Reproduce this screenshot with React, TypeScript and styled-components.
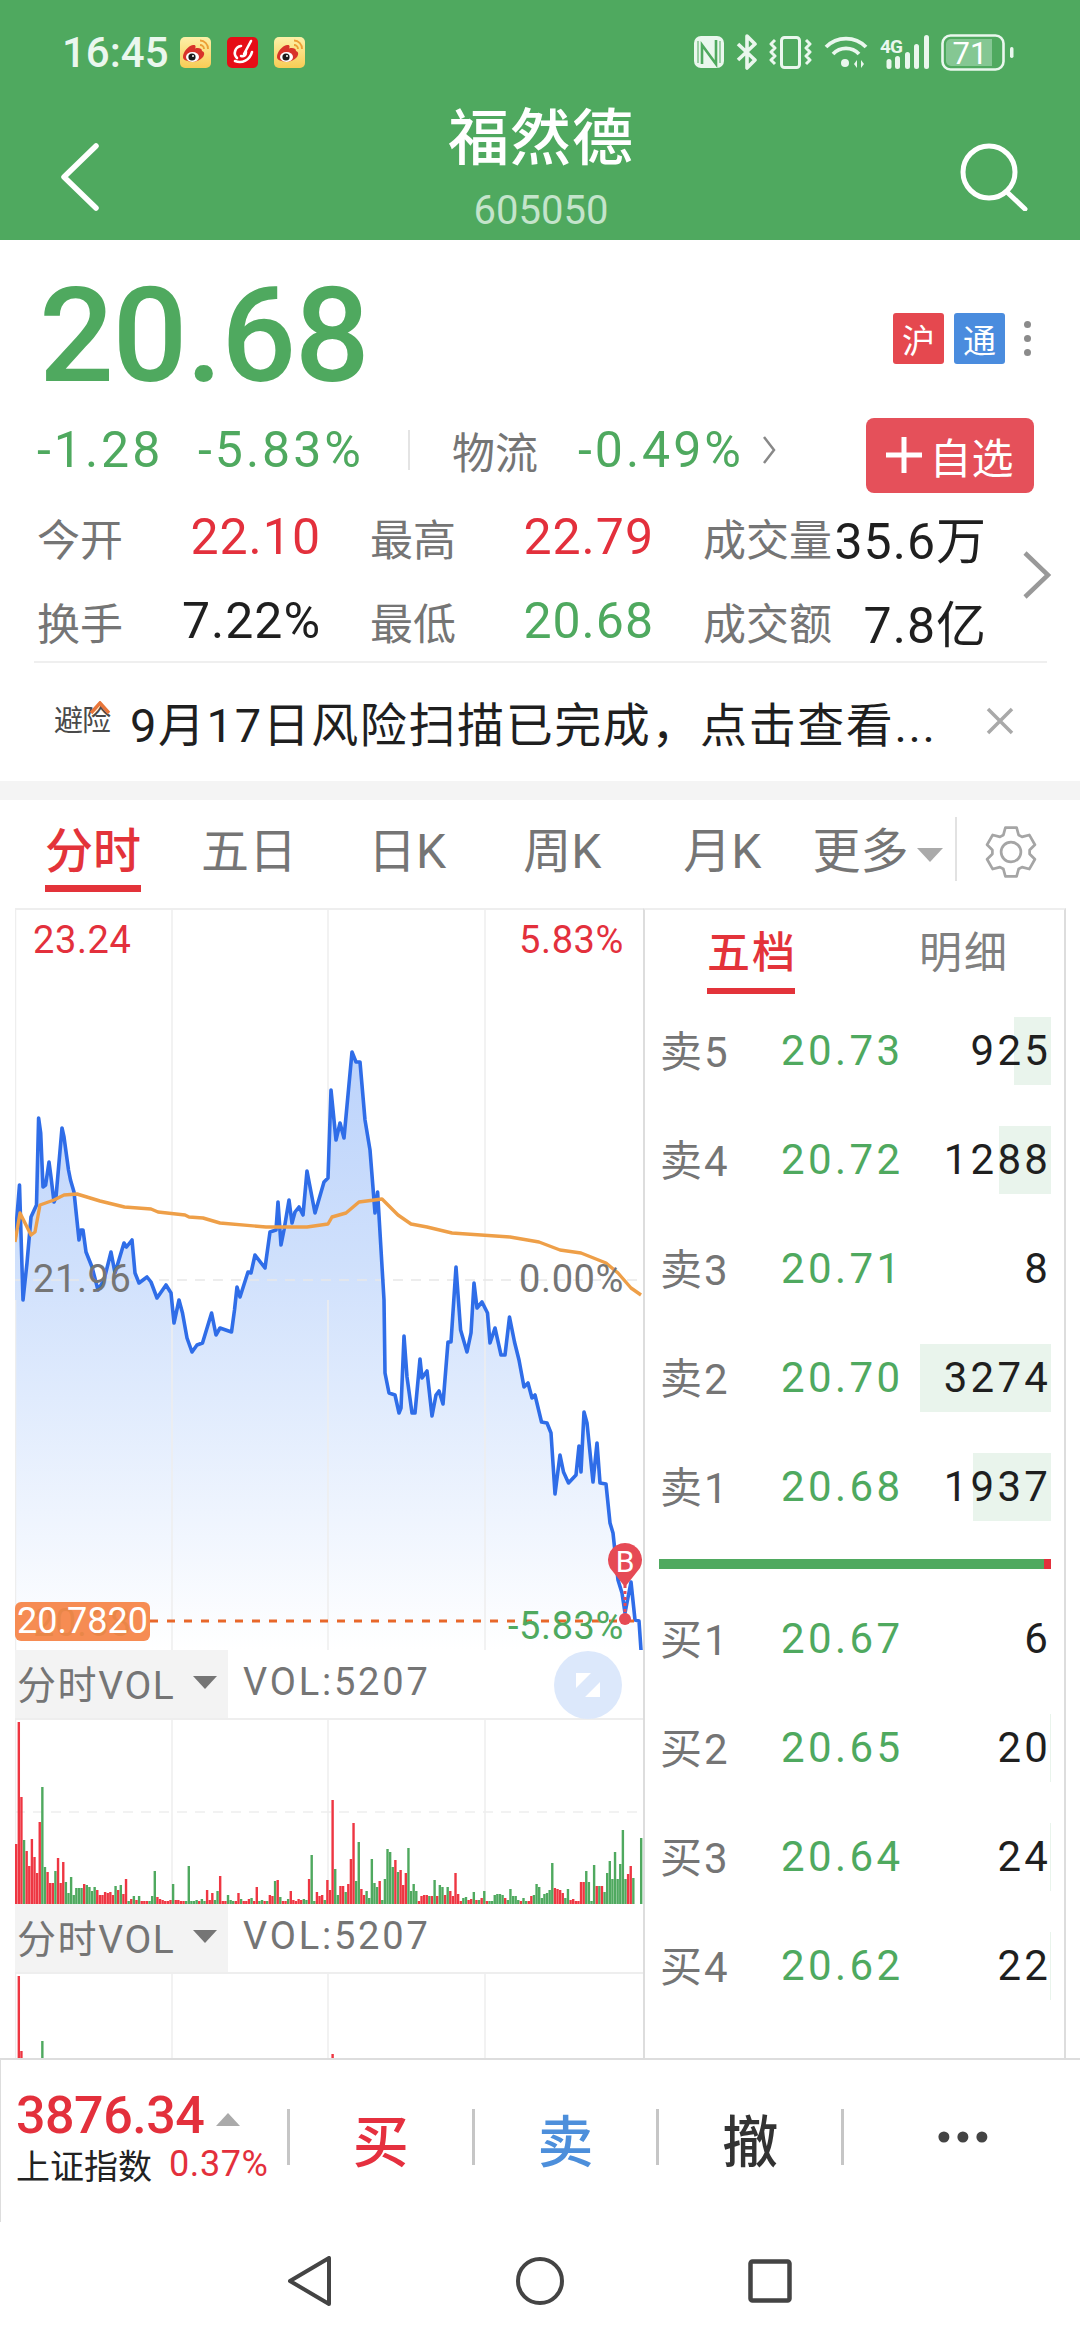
import React from "react";
import styled, { createGlobalStyle } from "styled-components";

const GREEN = "#4fa95f";
const RED = "#e3303c";
const GREY = "#757575";
const ICON = "#eaf7ee";
const FONT = `Roboto, "Noto Sans CJK SC", sans-serif`;

const linePoints =
  "15,1240 19.5,1185 23,1300 27,1263 31,1217 36.5,1205 38.6,1118 40.7,1133 43,1187 45.6,1185 49,1162 51,1177 54,1202 56,1197 62,1128 64,1137 68.5,1170 70.5,1180 74,1192 79,1240 81,1230 83,1230 86,1252 92,1267 98,1290 104,1280 111,1252 115,1273 124,1243 126.5,1247 132,1240 135,1273 139,1283 147,1277 151,1282 157,1298 166,1285 171,1293 174,1323 179,1300 182.5,1313 187,1338 192,1352 197,1345 202.5,1343 211.6,1313 216,1335 220,1328 231.5,1332 234.5,1310 237,1287 240,1297 248,1272 251,1273 255,1255 265,1268 270,1232 276,1230 278,1202 281,1245 284,1230 289,1200 292,1223 295,1212 299,1207 303,1215 307,1171 315,1213 324,1182 328,1178 331,1090 336,1140 340,1123 344,1138 352,1052 356,1062 360,1062 365,1120 370,1150 375,1213 377.6,1192 384,1300 385,1373 389,1393 395,1395 399,1413 401,1408 404,1336 407,1377 412,1413 415,1413 420,1359 422,1378 427,1371 432,1416 436,1395 439,1391 443,1404 448,1342 451,1342 456,1267 460.6,1330 467,1352 471,1333 474,1283 477,1308 482,1302 487.5,1313 490,1343 495,1328 501,1355 505,1355 509.5,1317 514.5,1342 519,1360 524,1387 528,1383 532,1398 535,1395 541.5,1422 547,1423 551,1433 555,1494 560,1455 563.5,1472 568.5,1483 576,1475 579,1446 581,1472 584,1412 587,1423 593,1482 597,1443 600,1483 606,1484 610,1523 613,1533 618,1580 622,1593 625,1613 631,1582 635,1620 639,1621 641,1650";

const avgPoints =
  "15,1242 20,1213 31,1235 35,1232 40,1205 54,1200 64,1195 77,1194 100,1201 124.5,1207 151,1209 158,1212 185,1215 189,1217 203,1218 220,1223 266,1227 307,1227 328,1224 332,1217 346,1213 359,1202 382,1199 398,1215 411,1224 427,1227 452,1233 510,1237 539,1242 560,1250 581,1253 606,1263 618,1273 631,1288 641,1295";

// positive is a red bar, negative a green one
const volumes = [
  60, 182, 107, -64, 53, 38, 65, 47, 31, 82,
  -117, -37, 32, 21, 21, -33, 46, 21, 42, -22,
  -11, -27, -9, -16, -16, -16, 20, -19, -17, -13,
  -17, 14, 9, 9, 12, 11, 12, 9, -18, 14,
  -19, 10, 25, -3, 5, -8, 4, -8, 3, 3,
  2, -3, -8, -33, 7, 5, 4, 2, 3, 4,
  -20, 4, 4, 3, 3, -3, -38, -1, -3, -4,
  3, -5, -3, 14, 4, 11, -4, -13, 28, 2,
  2, -9, -4, -3, 3, 11, -5, 1, 2, 5,
  -6, 1, 17, -2, -4, 1, -2, 9, 8, -23,
  24, -7, 3, 3, -5, 13, 4, 3, 5, 4,
  -5, -4, 25, -49, -3, 12, 8, 9, -4, 24,
  14, 104, -35, -9, 18, 18, -12, 20, 45, 81,
  -23, -62, 15, 9, -13, -6, -45, -21, -17, 23,
  -4, -25, -55, -52, -37, 44, -32, 34, 19, 31,
  -56, -13, -20, -13, 3, 8, 9, 9, -8, 8,
  -24, 8, -19, -17, 9, -17, 13, 8, 31, 10,
  3, -6, -7, 4, 5, -12, 4, -4, 6, -13,
  3, -3, -3, -9, -10, -10, -9, 6, -4, -15,
  -8, -8, -4, 2, -6, -3, 3, 8, -9, -20,
  -17, -6, -10, -11, -14, -41, 16, 15, 14, 11,
  -6, -15, 4, 5, 3, 3, 22, 22, -33, -22,
  -3, -39, 18, -18, 18, -12, -31, -43, -25, -52,
  -25, -40, -74, -25, 30, 38, -26, 0, 0, -66,
];

const sellRows = [
  { name: "卖5", price: "20.73", qty: "925", depth: 37 },
  { name: "卖4", price: "20.72", qty: "1288", depth: 52 },
  { name: "卖3", price: "20.71", qty: "8", depth: 0 },
  { name: "卖2", price: "20.70", qty: "3274", depth: 131 },
  { name: "卖1", price: "20.68", qty: "1937", depth: 78 },
];

const buyRows = [
  { name: "买1", price: "20.67", qty: "6", depth: 0 },
  { name: "买2", price: "20.65", qty: "20", depth: 1 },
  { name: "买3", price: "20.64", qty: "24", depth: 1 },
  { name: "买4", price: "20.62", qty: "22", depth: 1 },
];

// six tooth gear outline around 25,25
const gearPath = () => {
  const pt = (deg: number, r: number) => {
    const a = (deg * Math.PI) / 180;
    return `${(25 + r * Math.cos(a)).toFixed(1)} ${(25 + r * Math.sin(a)).toFixed(1)}`;
  };
  let d = "";
  for (let k = 0; k < 6; k++) {
    const c = -90 + k * 60;
    d += `${k === 0 ? "M" : "L"}${pt(c - 24, 18)} L${pt(c - 13, 24)} L${pt(c + 13, 24)} L${pt(c + 24, 18)} `;
  }
  return d + "Z";
};

const GlobalStyle = createGlobalStyle`
  html, body { margin: 0; padding: 0; background: #fff; }
  * { box-sizing: border-box; }
`;

const Phone = styled.div`
  width: 1080px;
  height: 2340px;
  overflow: hidden;
  display: flex;
  flex-direction: column;
  background: #fff;
  font-family: ${FONT};
`;

const Header = styled.header`
  height: 240px;
  background: ${GREEN};
  color: #fff;
`;

const StatusBar = styled.div`
  height: 98px;
  padding: 6px 66px 0 62px;
  display: flex;
  align-items: center;
  justify-content: space-between;
`;

const StatusGroup = styled.div<{ $gap: number }>`
  display: flex;
  align-items: center;
  gap: ${(p) => p.$gap}px;
`;

const Clock = styled.span`
  font-size: 42px;
  font-weight: 500;
  color: ${ICON};
  width: 102px;
  white-space: nowrap;
`;

const TitleRow = styled.div`
  height: 142px;
  padding: 16px 52px 0 60px;
  display: flex;
  align-items: center;
  justify-content: space-between;
`;

const TitleBlock = styled.div`
  display: flex;
  flex-direction: column;
  align-items: center;
  margin: -16px 0 0 22px;
`;

const Title = styled.div`
  font-size: 61px;
  line-height: 74px;
  font-weight: 500;
  letter-spacing: 1px;
`;

const Code = styled.div`
  font-size: 40px;
  line-height: 50px;
  color: #c4e4cb;
  margin-top: 10px;
`;

const Quote = styled.section`
  height: 541px;
  padding: 24px 34px 0 37px;
  position: relative;
`;

const PriceRow = styled.div`
  display: flex;
  justify-content: space-between;
  align-items: center;
  height: 144px;
`;

const BigPrice = styled.div`
  font-size: 132px;
  line-height: 144px;
  font-weight: 500;
  color: ${GREEN};
  letter-spacing: -1.5px;
  margin-left: 2px;
`;

const TagGroup = styled.div`
  display: flex;
  align-items: center;
  gap: 10px;
  margin-top: 5px;
`;

const Tag = styled.span<{ $bg: string }>`
  width: 51px;
  height: 51px;
  border-radius: 3px;
  background: ${(p) => p.$bg};
  color: #fff;
  font-size: 33px;
  display: flex;
  align-items: center;
  justify-content: center;
`;

const Dots = styled.div`
  display: flex;
  flex-direction: column;
  gap: 7px;
  margin-left: 9px;
  margin-right: 15px;
  span {
    width: 7px;
    height: 7px;
    border-radius: 50%;
    background: #8b8b8b;
  }
`;

const ChangeRow = styled.div`
  display: flex;
  align-items: center;
  height: 76px;
  margin-top: 4px;
`;

const ChangeValue = styled.span<{ $w: number }>`
  width: ${(p) => p.$w}px;
  font-size: 50px;
  letter-spacing: 3px;
  white-space: nowrap;
  color: ${GREEN};
`;

const VLine = styled.span`
  width: 2px;
  height: 40px;
  background: #e4e4e4;
  margin: 0 42px 0 44px;
`;

const SectorName = styled.span`
  width: 126px;
  font-size: 43px;
  color: ${GREY};
`;

const FollowButton = styled.div`
  margin: 10px 12px 0 auto;
  width: 168px;
  height: 75px;
  background: #e5505a;
  border-radius: 8px;
  color: #fff;
  font-size: 42px;
  display: flex;
  align-items: center;
  justify-content: center;
  gap: 7px;
`;

const Stats = styled.div`
  position: relative;
  margin-top: 7px;
  display: grid;
  grid-template-columns: repeat(3, 281px);
  grid-auto-rows: 84px;
  column-gap: 52px;
  width: 947px;
`;

const Stat = styled.div`
  display: flex;
  align-items: center;
  justify-content: space-between;
  white-space: nowrap;
`;

const StatLabel = styled.span`
  font-size: 43px;
  color: ${GREY};
`;

const StatValue = styled.span<{ $color: string }>`
  font-size: 50px;
  letter-spacing: 1px;
  margin-right: -3px;
  color: ${(p) => p.$color};
`;

const MoreArrow = styled.svg`
  position: absolute;
  right: 28px;
  top: 310px;
`;

const Notice = styled.div`
  margin: -2px -1px 0 -3px;
  border-top: 2px solid #efefef;
  height: 118px;
  display: flex;
  align-items: center;
  padding-left: 20px;
`;

const NoticeBadge = styled.span`
  position: relative;
  width: 56px;
  font-size: 29px;
  line-height: 34px;
  white-space: nowrap;
  color: #4a4a4a;
  letter-spacing: -1px;
  svg {
    position: absolute;
    left: 36px;
    top: -3px;
  }
`;

const NoticeText = styled.span`
  margin-left: 20px;
  font-size: 47px;
  letter-spacing: 1.6px;
  color: #1f1f1f;
  white-space: nowrap;
  width: 855px;
`;

const Band = styled.div`
  height: 19px;
  background: #f4f4f4;
`;

const TabBar = styled.nav`
  height: 108px;
  display: flex;
  align-items: center;
  padding-top: 2px;
`;

const Tab = styled.span<{ $x: number; $active?: boolean }>`
  margin-left: ${(p) => p.$x}px;
  font-size: 48px;
  line-height: 60px;
  white-space: nowrap;
  color: ${(p) => (p.$active ? "#e3333a" : GREY)};
  font-weight: ${(p) => (p.$active ? 500 : 400)};
  border-bottom: ${(p) => (p.$active ? "7px solid #e3333a" : "7px solid transparent")};
  padding: 4px 0 3px;
`;

const Caret = styled.span<{ $w: number; $h: number; $color: string; $x?: number }>`
  display: inline-block;
  width: 0;
  height: 0;
  margin-left: ${(p) => p.$x ?? 0}px;
  border-left: ${(p) => p.$w / 2}px solid transparent;
  border-right: ${(p) => p.$w / 2}px solid transparent;
  border-top: ${(p) => p.$h}px solid ${(p) => p.$color};
`;

const CaretUp = styled.span`
  width: 0;
  height: 0;
  margin-top: 8px;
  border-left: 12px solid transparent;
  border-right: 12px solid transparent;
  border-bottom: 13px solid #aaaaaa;
`;

const TabDivider = styled.span`
  width: 2px;
  height: 64px;
  background: #e2e2e2;
  margin: -12px 28px 0 12px;
`;

const GearIcon = styled.svg`
  margin-top: -6px;
`;

const Main = styled.main`
  height: 1150px;
  display: flex;
  padding-left: 15px;
  overflow: hidden;
`;

const ChartColumn = styled.div`
  width: 628px;
  border-top: 2px solid #eeeeee;
  flex-shrink: 0;
`;

const PriceChart = styled.div`
  height: 740px;
  position: relative;
`;

const ChartSvg = styled.svg`
  display: block;
`;

const AxisLabel = styled.span<{ $color: string; $top: number; $left?: number; $right?: number }>`
  position: absolute;
  top: ${(p) => p.$top}px;
  ${(p) => (p.$left !== undefined ? `left: ${p.$left}px;` : "")}
  ${(p) => (p.$right !== undefined ? `right: ${p.$right}px;` : "")}
  font-size: 38px;
  line-height: 42px;
  letter-spacing: 0.6px;
  color: ${(p) => p.$color};
`;

const LastTag = styled.span`
  position: absolute;
  left: 0;
  top: 692px;
  width: 135px;
  height: 39px;
  border-radius: 6px;
  background: rgba(245, 131, 70, 0.93);
  color: #fff;
  font-size: 36px;
  line-height: 39px;
  text-align: center;
`;

const VolHeader = styled.div`
  height: 70px;
  border-bottom: 2px solid #eeeeee;
  display: flex;
  align-items: center;
  position: relative;
`;

const VolSelect = styled.div`
  width: 213px;
  height: 100%;
  background: #f3f3f3;
  display: flex;
  align-items: center;
  padding: 0 0 4px 2px;
  gap: 18px;
  font-size: 39px;
  letter-spacing: 1.6px;
  color: ${GREY};
  white-space: nowrap;
`;

const VolValue = styled.span`
  margin: -4px 0 0 15px;
  font-size: 38px;
  letter-spacing: 2.8px;
  color: ${GREY};
`;

const ExpandButton = styled.div`
  position: absolute;
  left: 539px;
  top: 1px;
  width: 68px;
  height: 68px;
  border-radius: 50%;
  background: #dce8fb;
  display: flex;
  align-items: center;
  justify-content: center;
`;

const OrderPanel = styled.aside`
  width: 423px;
  border-left: 2px solid #dddddd;
  border-right: 2px solid #dddddd;
  border-top: 2px solid #eeeeee;
  padding: 0 13px 0 14px;
`;

const PanelTabs = styled.div`
  height: 84px;
  display: flex;
`;

const PanelTab = styled.div<{ $active?: boolean }>`
  margin-left: ${(p) => (p.$active ? 48 : 124)}px;
  width: ${(p) => (p.$active ? 88 : 84)}px;
  height: 84px;
  padding-top: 18px;
  font-size: 43px;
  line-height: 50px;
  letter-spacing: 2px;
  text-align: center;
  white-space: nowrap;
  font-weight: ${(p) => (p.$active ? 500 : 400)};
  color: ${(p) => (p.$active ? "#e3333a" : "#808080")};
  border-bottom: ${(p) => (p.$active ? "6px solid #e3333a" : "none")};
`;

const BookGroup = styled.div<{ $top: number }>`
  margin-top: ${(p) => p.$top}px;
`;

const BookRow = styled.div`
  height: 109px;
  display: flex;
  align-items: center;
  position: relative;
`;

const BookName = styled.span`
  width: 122px;
  margin-top: -4px;
  padding-left: 1px;
  font-size: 42px;
  letter-spacing: 2px;
  color: ${GREY};
`;

const BookPrice = styled.span`
  font-size: 42px;
  font-family: Roboto, sans-serif;
  letter-spacing: 3.4px;
  color: ${GREEN};
`;

const BookQty = styled.span`
  margin-left: auto;
  font-size: 42px;
  letter-spacing: 3.2px;
  color: #1f1f1f;
  position: relative;
`;

const DepthBar = styled.span`
  position: absolute;
  right: 0;
  top: 21px;
  height: 68px;
  background: #e9f4ec;
`;

const Gauge = styled.div`
  height: 10px;
  margin-top: 18px;
  background: ${GREEN};
  display: flex;
  justify-content: flex-end;
  span {
    width: 7px;
    background: ${RED};
  }
`;

const BottomBar = styled.footer`
  height: 164px;
  border-top: 2px solid #dddddd;
  border-left: 1px solid #dddddd;
  display: flex;
  align-items: center;
  background: #fff;
  padding-bottom: 8px;
`;

const IndexBlock = styled.div`
  width: 286px;
  padding: 5px 0 0 15px;
`;

const IndexTop = styled.div`
  display: flex;
  align-items: center;
  gap: 12px;
  height: 50px;
`;

const IndexValue = styled.span`
  font-size: 52px;
  line-height: 50px;
  font-weight: 500;
  letter-spacing: -0.5px;
  color: ${RED};
`;

const IndexBottom = styled.div`
  display: flex;
  align-items: center;
  gap: 17px;
  margin-top: -1px;
  font-size: 34px;
  color: #222;
  white-space: nowrap;
  span:last-child {
    font-size: 36px;
    letter-spacing: 0.6px;
    color: ${RED};
  }
`;

const BarDivider = styled.span`
  width: 3px;
  height: 56px;
  background: #c6c6c6;
  flex-shrink: 0;
`;

const TradeAction = styled.span<{ $color: string }>`
  width: 182px;
  text-align: center;
  font-size: 56px;
  font-weight: 500;
  color: ${(p) => p.$color};
`;

const NavBar = styled.div`
  flex: 1;
  display: flex;
  align-items: center;
  justify-content: center;
`;

const NavSlot = styled.div`
  width: 230px;
  display: flex;
  justify-content: center;
`;

const Weibo = () => (
  <svg width="31" height="31" viewBox="0 0 31 31">
    <defs>
      <linearGradient id="wb" x1="0" y1="0" x2="0" y2="1">
        <stop offset="0" stopColor="#fdf0a8" />
        <stop offset="1" stopColor="#f8cc55" />
      </linearGradient>
    </defs>
    <rect width="31" height="31" rx="5" fill="url(#wb)" />
    <path d="M20 3.5a8 8 0 0 1 8 8.5M20 8a4 4 0 0 1 4 4" stroke="#ec9f35" strokeWidth="1.8" fill="none" />
    <path d="M3 20c0-5 5-11 10-12 3-.5 3 2 2 3.5 3-1 7-.5 7 2.5 3 1 2.500 4 1 6-3 4-9 5.500-13 4.500S3 23 3 20z" fill="#d8322a" />
    <ellipse cx="12.500" cy="20" rx="6.500" ry="5" fill="#fff" />
    <circle cx="12" cy="20" r="3.600" fill="#1a1a1a" />
    <circle cx="13" cy="19" r="1" fill="#fff" />
  </svg>
);

const RedApp = () => (
  <svg width="31" height="31" viewBox="0 0 31 31">
    <rect width="31" height="31" rx="5" fill="#e60d16" />
    <path d="M10 21a7 7 0 0 1 4-12M8 24c7 3 15-1 17-9M14 19c3 1 5-1 5-4M17 17l7-13" stroke="#fff" strokeWidth="2.600" fill="none" strokeLinecap="round" />
  </svg>
);

const StatusIcons = () => (
  <StatusGroup $gap={12}>
    {/* nfc */}
    <svg width="30" height="32" viewBox="0 0 30 32">
      <rect width="30" height="32" rx="7" fill={ICON} />
      <path d="M8 28V9l14 19V4" fill="none" stroke={GREEN} strokeWidth="2.600" />
      <path d="M4 5v22M26 5v22" stroke={GREEN} strokeWidth="1" />
    </svg>
    {/* bluetooth */}
    <svg width="21" height="36" viewBox="0 0 21 36" fill="none" stroke={ICON} strokeWidth="3.600" strokeLinejoin="round">
      <path d="M2 10l17 16-8 8V2l8 8L2 26" />
    </svg>
    {/* vibrate */}
    <svg width="43" height="33" viewBox="0 0 43 33" fill="none" stroke={ICON} strokeWidth="3" strokeLinejoin="round">
      <rect x="12.500" y="1.500" width="18" height="30" rx="3" />
      <path d="M6 4L2 8l4 4-4 4 4 4-4 4 4 4M37 4l4 4-4 4 4 4-4 4 4 4-4 4" />
    </svg>
    {/* wifi */}
    <svg width="44" height="34" viewBox="0 0 44 34" fill="none" stroke={ICON} strokeWidth="3.800">
      <path d="M2 12a28 28 0 0 1 40 0M9 19a18 18 0 0 1 26 0" />
      <circle cx="21" cy="28" r="4" fill={ICON} stroke="none" />
      <path d="M30 31l3-4v8zM40 31l-3-4v8z" fill={ICON} stroke="none" transform="translate(0 -2)" />
    </svg>
    {/* signal */}
    <svg width="49" height="34" viewBox="0 0 49 34" fill={ICON}>
      <text x="0" y="18" fontSize="19" fontWeight="700" letterSpacing="-1" fontFamily="Roboto, sans-serif">4G</text>
      <rect x="6.500" y="24" width="5" height="10" rx="2.500" />
      <rect x="15" y="21" width="5" height="13" rx="2.500" />
      <rect x="25" y="17" width="5" height="17" rx="2.500" />
      <rect x="34" y="9" width="5" height="25" rx="2.500" />
      <rect x="44" y="0" width="5" height="34" rx="2.500" />
    </svg>
    {/* battery */}
    <svg width="73" height="37" viewBox="0 0 73 37">
      <rect x="1.500" y="1.500" width="61" height="34" rx="8" fill="none" stroke={ICON} strokeWidth="2.600" />
      <path d="M10 5h41v27H10a5 5 0 0 1-5-5V10a5 5 0 0 1 5-5z" fill="#85c793" />
      <rect x="69" y="13" width="3.500" height="11" rx="1.700" fill={ICON} />
      <text x="29" y="30" textAnchor="middle" fontSize="31" fill="#fff" fontFamily="Roboto, sans-serif">71</text>
    </svg>
  </StatusGroup>
);

const Grid = ({ top, bottom }: { top: number; bottom: number }) => (
  <g stroke="#eeeeee" strokeWidth="1.5">
    <line x1="15.5" y1={top} x2="15.5" y2={bottom} />
    <line x1="172" y1={top} x2="172" y2={bottom} />
    <line x1="328" y1={top} x2="328" y2={bottom} />
    <line x1="485" y1={top} x2="485" y2={bottom} />
  </g>
);

const VolumeBars = () => (
  <ChartSvg width="628" height="184" viewBox="15 0 628 184">
    <Grid top={0} bottom={184} />
    <line x1="15" y1="92" x2="642" y2="92" stroke="#eeeeee" strokeWidth="1.5" strokeDasharray="10 8" />
    {volumes.map((v, i) =>
      v === 0 ? null : (
        <rect
          key={i}
          x={15 + i * 2.615}
          y={184 - Math.max(Math.abs(v), 3)}
          width="2.4"
          height={Math.max(Math.abs(v), 3)}
          fill={v > 0 ? "#ee3642" : "#4fa95f"}
        />
      ),
    )}
  </ChartSvg>
);

const VolumeHead = ({ expand }: { expand?: boolean }) => (
  <VolHeader>
    <VolSelect>
      分时VOL
      <Caret $w={24} $h={13} $color={GREY} />
    </VolSelect>
    <VolValue>VOL:5207</VolValue>
    {expand && (
      <ExpandButton>
        <svg width="30" height="30" viewBox="0 0 30 30" fill="#fff">
          <path d="M3 3h15L3 18zM27 27H12l15-15z" />
        </svg>
      </ExpandButton>
    )}
  </VolHeader>
);

const Book = ({ name, price, qty, depth }: { name: string; price: string; qty: string; depth: number }) => (
  <BookRow>
    {depth > 0 && <DepthBar style={{ width: depth }} />}
    <BookName>{name}</BookName>
    <BookPrice>{price}</BookPrice>
    <BookQty>{qty}</BookQty>
  </BookRow>
);

const App: React.FC = () => (
  <Phone>
    <GlobalStyle />
    <Header>
      <StatusBar>
        <StatusGroup $gap={16}>
          <Clock>16:45</Clock>
          <Weibo />
          <RedApp />
          <Weibo />
        </StatusGroup>
        <StatusIcons />
      </StatusBar>
      <TitleRow>
        <svg width="40" height="68" viewBox="0 0 40 68" fill="none" stroke="#fff" strokeWidth="5.5" strokeLinecap="round" strokeLinejoin="round">
          <path d="M36 3L4 34l32 31" />
        </svg>
        <TitleBlock>
          <Title>福然德</Title>
          <Code>605050</Code>
        </TitleBlock>
        <svg width="68" height="68" viewBox="0 0 68 68" fill="none" stroke="#fff" strokeWidth="5" strokeLinecap="round">
          <circle cx="29" cy="29" r="26" />
          <path d="M48 50l17 16" />
        </svg>
      </TitleRow>
    </Header>

    <Quote>
      <PriceRow>
        <BigPrice>20.68</BigPrice>
        <TagGroup>
          <Tag $bg="#e5484f">沪</Tag>
          <Tag $bg="#4a8cde">通</Tag>
          <Dots>
            <span />
            <span />
            <span />
          </Dots>
        </TagGroup>
      </PriceRow>
      <ChangeRow>
        <ChangeValue $w={161}>-1.28</ChangeValue>
        <ChangeValue $w={166}>-5.83%</ChangeValue>
        <VLine />
        <SectorName>物流</SectorName>
        <ChangeValue $w={184}>-0.49%</ChangeValue>
        <svg width="14" height="30" viewBox="0 0 14 30" fill="none" stroke="#888" strokeWidth="2.5">
          <path d="M2 2l10 13L2 28" />
        </svg>
        <FollowButton>
          <svg width="36" height="36" viewBox="0 0 36 36" stroke="#fff" strokeWidth="5">
            <path d="M18 0v36M0 18h36" />
          </svg>
          自选
        </FollowButton>
      </ChangeRow>
      <Stats>
        <Stat>
          <StatLabel>今开</StatLabel>
          <StatValue $color={RED}>22.10</StatValue>
        </Stat>
        <Stat>
          <StatLabel>最高</StatLabel>
          <StatValue $color={RED}>22.79</StatValue>
        </Stat>
        <Stat>
          <StatLabel>成交量</StatLabel>
          <StatValue $color="#1f1f1f">35.6万</StatValue>
        </Stat>
        <Stat>
          <StatLabel>换手</StatLabel>
          <StatValue $color="#1f1f1f">7.22%</StatValue>
        </Stat>
        <Stat>
          <StatLabel>最低</StatLabel>
          <StatValue $color={GREEN}>20.68</StatValue>
        </Stat>
        <Stat>
          <StatLabel>成交额</StatLabel>
          <StatValue $color="#1f1f1f">7.8亿</StatValue>
        </Stat>
      </Stats>
      <MoreArrow width="30" height="50" viewBox="0 0 30 50" fill="none" stroke="#999" strokeWidth="4.5">
        <path d="M3 3l23 22L3 47" />
      </MoreArrow>
      <Notice>
        <NoticeBadge>
          避险
          <svg width="20" height="14" viewBox="0 0 20 14" fill="none" stroke="#e8763a" strokeWidth="3.500">
            <path d="M1 12L10 2l9 10" />
          </svg>
        </NoticeBadge>
        <NoticeText>9月17日风险扫描已完成，点击查看...</NoticeText>
        <svg width="30" height="30" viewBox="0 0 30 30" stroke="#a9a9a9" strokeWidth="3.5">
          <path d="M3 3l24 24M27 3L3 27" />
        </svg>
      </Notice>
    </Quote>

    <Band />

    <TabBar>
      <Tab $x={45} $active>分时</Tab>
      <Tab $x={60}>五日</Tab>
      <Tab $x={71}>日K</Tab>
      <Tab $x={77}>周K</Tab>
      <Tab $x={82}>月K</Tab>
      <Tab $x={51}>更多</Tab>
      <Caret $w={27} $h={14} $color="#aaaaaa" $x={9} />
      <TabDivider />
      <GearIcon width="52" height="52" viewBox="0 0 50 50" fill="none" stroke="#a5a5a5" strokeWidth="2.600" strokeLinejoin="round">
        <path d={gearPath()} />
        <circle cx="25" cy="25" r="9.500" />
      </GearIcon>
    </TabBar>

    <Main>
      <ChartColumn>
        <PriceChart>
          <ChartSvg width="628" height="740" viewBox="15 910 628 740">
            <defs>
              <linearGradient id="area" gradientUnits="userSpaceOnUse" x1="0" y1="1050" x2="0" y2="1650">
                <stop offset="0" stopColor="#bcd3fb" />
                <stop offset="0.35" stopColor="#cfe0fc" />
                <stop offset="1" stopColor="#ffffff" />
              </linearGradient>
            </defs>
            <Grid top={910} bottom={1650} />
            <polygon points={`${linePoints} 641,1650 15,1650`} fill="url(#area)" />
            <Grid top={1300} bottom={1650} />
            <line x1="15" y1="1280" x2="642" y2="1280" stroke="#e8e8e8" strokeWidth="1.5" strokeDasharray="10 8" />
            <polyline points={linePoints} fill="none" stroke="#2f6de8" strokeWidth="3.6" strokeLinejoin="round" />
            <polyline points={avgPoints} fill="none" stroke="#ee9f48" strokeWidth="3.4" strokeLinejoin="round" />
            <line x1="150" y1="1621" x2="642" y2="1621" stroke="#e8672a" strokeWidth="3" strokeDasharray="8 9" />
            <line x1="625" y1="1585" x2="625" y2="1619" stroke="#e64a55" strokeWidth="3" strokeDasharray="3 3" />
            <circle cx="625" cy="1619" r="6" fill="#e64a55" />
            <path d="M610 1568a17 17 0 1 1 30 0L625 1587z" fill="#e64a55" />
            <text x="625" y="1572" textAnchor="middle" fontSize="30" fill="#fff" fontFamily="Roboto, sans-serif">B</text>
          </ChartSvg>
          <AxisLabel $color={RED} $top={9} $left={18}>23.24</AxisLabel>
          <AxisLabel $color={RED} $top={9} $right={19}>5.83%</AxisLabel>
          <AxisLabel $color={GREY} $top={348} $left={18}>21.96</AxisLabel>
          <AxisLabel $color={GREY} $top={348} $right={19}>0.00%</AxisLabel>
          <AxisLabel $color={GREEN} $top={695} $right={19}>-5.83%</AxisLabel>
          <AxisLabel $color={GREEN} $top={692} $left={18}>20.68</AxisLabel>
          <LastTag>20.7820</LastTag>
        </PriceChart>
        <VolumeHead expand />
        <VolumeBars />
        <VolumeHead />
        <VolumeBars />
      </ChartColumn>

      <OrderPanel>
        <PanelTabs>
          <PanelTab $active>五档</PanelTab>
          <PanelTab>明细</PanelTab>
        </PanelTabs>
        <BookGroup $top={2}>
          {sellRows.map((r) => (
            <Book key={r.name} {...r} />
          ))}
        </BookGroup>
        <Gauge>
          <span />
        </Gauge>
        <BookGroup $top={15}>
          {buyRows.map((r) => (
            <Book key={r.name} {...r} />
          ))}
        </BookGroup>
      </OrderPanel>
    </Main>

    <BottomBar>
      <IndexBlock>
        <IndexTop>
          <IndexValue>3876.34</IndexValue>
          <CaretUp />
        </IndexTop>
        <IndexBottom>
          <span>上证指数</span>
          <span>0.37%</span>
        </IndexBottom>
      </IndexBlock>
      <BarDivider />
      <TradeAction $color="#e5303f">买</TradeAction>
      <BarDivider />
      <TradeAction $color="#4d8fdb">卖</TradeAction>
      <BarDivider />
      <TradeAction $color="#333333">撤</TradeAction>
      <BarDivider />
      <svg width="236" height="12" viewBox="0 0 236 12" fill="#444">
        <circle cx="100" cy="6" r="5.5" />
        <circle cx="119" cy="6" r="5.5" />
        <circle cx="138" cy="6" r="5.5" />
      </svg>
    </BottomBar>

    <NavBar>
      <NavSlot>
        <svg width="44" height="50" viewBox="0 0 44 50" fill="none" stroke="#444" strokeWidth="4" strokeLinejoin="round">
          <path d="M41 2v46L2 25z" />
        </svg>
      </NavSlot>
      <NavSlot>
        <svg width="48" height="48" viewBox="0 0 48 48" fill="none" stroke="#444" strokeWidth="4">
          <circle cx="24" cy="24" r="22" />
        </svg>
      </NavSlot>
      <NavSlot>
        <svg width="44" height="44" viewBox="0 0 44 44" fill="none" stroke="#444" strokeWidth="4.5" strokeLinejoin="round">
          <rect x="2.5" y="2.5" width="39" height="39" rx="2" />
        </svg>
      </NavSlot>
    </NavBar>
  </Phone>
);

export default App;
